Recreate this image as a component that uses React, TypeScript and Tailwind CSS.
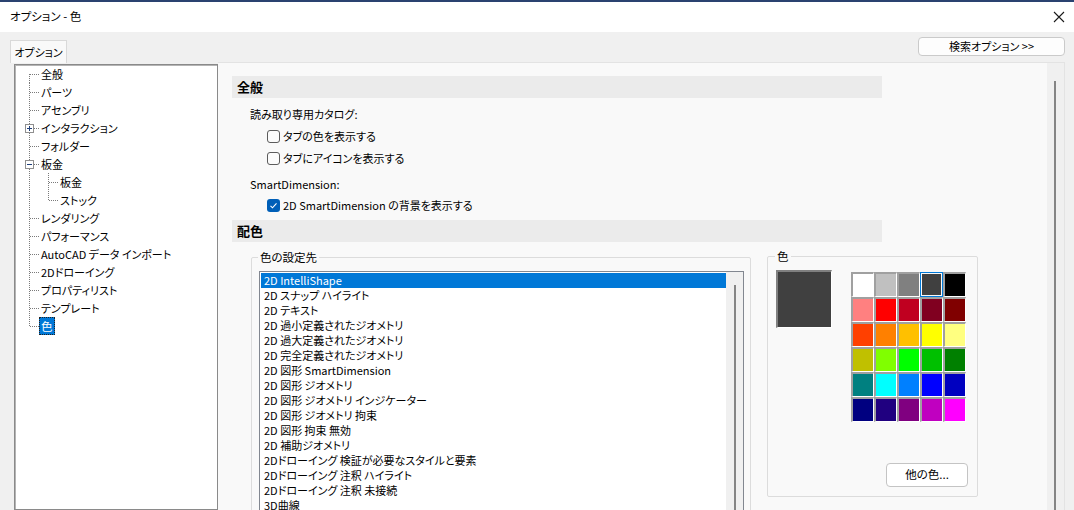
import React from 'react';

type TreeItem = {
  label: string;
  level: 0 | 1;
  box?: 'plus' | 'minus';
  first?: boolean;
  last?: boolean;
  lastChild?: boolean;
  selected?: boolean;
};

const tree: TreeItem[] = [
  { label: '全般', level: 0, first: true },
  { label: 'パーツ', level: 0 },
  { label: 'アセンブリ', level: 0 },
  { label: 'インタラクション', level: 0, box: 'plus' },
  { label: 'フォルダー', level: 0 },
  { label: '板金', level: 0, box: 'minus' },
  { label: '板金', level: 1 },
  { label: 'ストック', level: 1, lastChild: true },
  { label: 'レンダリング', level: 0 },
  { label: 'パフォーマンス', level: 0 },
  { label: 'AutoCAD データ インポート', level: 0 },
  { label: '2Dドローイング', level: 0 },
  { label: 'プロパティリスト', level: 0 },
  { label: 'テンプレート', level: 0 },
  { label: '色', level: 0, last: true, selected: true },
];

const listItems = [
  '2D IntelliShape',
  '2D スナップ ハイライト',
  '2D テキスト',
  '2D 過小定義されたジオメトリ',
  '2D 過大定義されたジオメトリ',
  '2D 完全定義されたジオメトリ',
  '2D 図形 SmartDimension',
  '2D 図形 ジオメトリ',
  '2D 図形 ジオメトリ インジケーター',
  '2D 図形 ジオメトリ 拘束',
  '2D 図形 拘束 無効',
  '2D 補助ジオメトリ',
  '2Dドローイング 検証が必要なスタイルと要素',
  '2Dドローイング 注釈 ハイライト',
  '2Dドローイング 注釈 未接続',
  '3D曲線',
];

const palette = [
  ['#ffffff', '#c0c0c0', '#808080', '#404040', '#000000'],
  ['#ff8080', '#ff0000', '#c00020', '#800020', '#800000'],
  ['#ff4000', '#ff8000', '#ffc000', '#ffff00', '#ffff80'],
  ['#c0c000', '#80ff00', '#00ff00', '#00c000', '#008000'],
  ['#008080', '#00ffff', '#0080ff', '#0000ff', '#0000c0'],
  ['#000080', '#200080', '#800080', '#c000c0', '#ff00ff'],
];

const dot = { stroke: '#7a7a7a', strokeDasharray: '1 1', shapeRendering: 'crispEdges' as const };

const Gutter: React.FC<{ item: TreeItem }> = ({ item }) => {
  if (item.level === 1) {
    return (
      <svg width="45" height="18" className="shrink-0">
        <line x1="14.5" y1="0" x2="14.5" y2="18" {...dot} />
        <line x1="33.5" y1="0" x2="33.5" y2={item.lastChild ? 10 : 18} {...dot} />
        <line x1="33.5" y1="9.5" x2="43" y2="9.5" {...dot} />
      </svg>
    );
  }
  const top = item.first ? 9 : 0;
  const bottom = item.last ? 10 : 18;
  return (
    <svg width="26" height="18" className="shrink-0">
      {item.box ? (
        <>
          {!item.first && <line x1="14.5" y1={top} x2="14.5" y2="5" {...dot} />}
          <line x1="14.5" y1="14" x2="14.5" y2={bottom} {...dot} />
          <line x1="19" y1="9.5" x2="24" y2="9.5" {...dot} />
          <rect x="10.5" y="5.5" width="8" height="8" fill="#fff" stroke="#8f8f8f" shapeRendering="crispEdges" />
          <line x1="12" y1="9.5" x2="17" y2="9.5" stroke="#1f3f7a" shapeRendering="crispEdges" />
          {item.box === 'plus' && (
            <line x1="14.5" y1="7" x2="14.5" y2="12" stroke="#1f3f7a" shapeRendering="crispEdges" />
          )}
        </>
      ) : (
        <>
          <line x1="14.5" y1={top} x2="14.5" y2={bottom} {...dot} />
          <line x1="14.5" y1="9.5" x2="24" y2="9.5" {...dot} />
        </>
      )}
    </svg>
  );
};

const CheckBox: React.FC<{ checked?: boolean; label: string }> = ({ checked, label }) => (
  <div className="flex items-center h-full">
    {checked ? (
      <div className="w-[13px] h-[13px] rounded-[3px] bg-[#005fb8] flex items-center justify-center">
        <svg width="9" height="9" viewBox="0 0 9 9">
          <polyline points="1.5,4.8 3.5,6.8 7.5,2.3" fill="none" stroke="#fff" strokeWidth="1.1" />
        </svg>
      </div>
    ) : (
      <div className="w-[13px] h-[13px] rounded-[3px] border border-[#5c5c5c] bg-[#fbfbfb]" />
    )}
    <span className="ml-[3px]">{label}</span>
  </div>
);

export default function App() {
  return (
    <div className="w-[1074px] h-[510px] overflow-hidden bg-[#f0f0f0] flex flex-col text-[11px] text-black font-['Noto_Sans_CJK_JP',sans-serif] [font-feature-settings:'palt']">
      <div className="h-[2px] bg-[#2a4270] shrink-0" />
      {/* Title bar */}
      <div className="h-[30px] bg-white flex items-center justify-between pl-[10px] pr-[9px] shrink-0 text-[11.5px]">
        <span>オプション - 色</span>
        <svg width="12" height="12" viewBox="0 0 12 12">
          <path d="M1 1 L11 11 M11 1 L1 11" stroke="#1a1a1a" strokeWidth="1.1" />
        </svg>
      </div>

      {/* Tab row */}
      <div className="h-[30px] flex items-start justify-between shrink-0">
        <div className="ml-[10px] mt-[8px] w-[57px] h-[23px] border border-b-0 border-[#d9d9d9] bg-[#f9f9f9] flex items-center justify-center">
          オプション
        </div>
        <button className="mr-[9px] mt-[5px] w-[147px] h-[19px] rounded-[4px] border border-[#cacaca] bg-[#fdfdfd] flex items-center justify-center leading-none">
          検索オプション &gt;&gt;
        </button>
      </div>

      {/* Main */}
      <div className="flex-1 flex pl-[14px] pr-[9px] min-h-0">
        {/* Tree */}
        <div className="w-[204px] mt-[2px] bg-white border border-[#8a8a8a] shadow-[inset_1px_1px_0_#b4b4b4] shrink-0">
          {tree.map((item, i) => (
            <div key={i} className="h-[18px] flex items-center leading-[18px]">
              <Gutter item={item} />
              {item.selected ? (
                <span className="-ml-[2px] px-[1px] h-[18px] border border-dotted border-[#222] bg-[#0078d7] text-white flex items-center text-[11.5px]">
                  {item.label}
                </span>
              ) : (
                <span className="whitespace-nowrap">{item.label}</span>
              )}
            </div>
          ))}
        </div>

        {/* Right panel */}
        <div className="flex-1 flex bg-[#f9f9f9] border-t border-r border-[#e3e3e3] min-w-0">
          <div className="flex-1 pl-[14px] pt-[13px] overflow-hidden">
            <div className="w-[650px] h-[22px] bg-[#ebebeb] flex items-center pl-[5px] text-[13px] font-bold">
              全般
            </div>
            <div className="mt-[5px] ml-[18px] h-[22px] flex items-center">読み取り専用カタログ:</div>
            <div className="ml-[35px] h-[22px]">
              <CheckBox label="タブの色を表示する" />
            </div>
            <div className="ml-[35px] h-[22px]">
              <CheckBox label="タブにアイコンを表示する" />
            </div>
            <div className="ml-[18px] h-[26px] pt-[4px] flex items-center">SmartDimension:</div>
            <div className="ml-[35px] h-[20px]">
              <CheckBox checked label="2D SmartDimension の背景を表示する" />
            </div>
            <div className="mt-[5px] w-[650px] h-[22px] bg-[#ebebeb] flex items-center pl-[5px] text-[13px] font-bold">
              配色
            </div>

            <div className="mt-[15px] ml-[19px] flex items-start gap-[16px]">
              {/* 色の設定先 */}
              <div className="relative w-[500px] h-[280px] border border-[#dcdcdc] rounded-[2px] pt-[13px] pl-[7px] shrink-0">
                <span className="absolute -top-[9px] left-[6px] px-[2px] bg-[#f9f9f9] leading-[16px] text-[11.5px]">色の設定先</span>
                <div className="w-[485px] h-[260px] border border-[#828790] bg-white flex">
                  <div className="flex-1 pt-[1px] pl-[1px]">
                    {listItems.map((t, i) => (
                      <div
                        key={i}
                        className={`h-[15px] leading-[15px] pl-[3px] whitespace-nowrap ${i === 0 ? 'bg-[#0078d7] text-white' : ''}`}
                      >
                        {t}
                      </div>
                    ))}
                  </div>
                  <div className="w-[17px] bg-[#f0f0f0] pt-[13px] pl-[8px]">
                    <div className="w-[2px] h-full bg-[#858585]" />
                  </div>
                </div>
              </div>

              {/* 色 */}
              <div className="relative -mt-[1px] w-[211px] h-[241px] border border-[#dcdcdc] rounded-[2px] pt-[13px] pl-[8px] pr-[9px] pb-[9px] flex flex-col shrink-0">
                <span className="absolute -top-[9px] left-[7px] px-[2px] bg-[#f9f9f9] leading-[16px] text-[11.5px]">色</span>
                <div className="flex items-start">
                  <div className="w-[56px] h-[58px] border-t-2 border-l-2 border-[#808080] border-r border-b border-r-white border-b-white bg-[#404040]" />
                  <div className="ml-[19px] mt-[2px] flex flex-col">
                    {palette.map((row, r) => (
                      <div key={r} className="flex">
                        {row.map((c, ci) =>
                          r === 0 && ci === 3 ? (
                            <div key={ci} className="w-[23px] h-[25px] border border-[#0078d7] p-[1px]">
                              <div className="w-full h-full" style={{ backgroundColor: c }} />
                            </div>
                          ) : (
                            <div
                              key={ci}
                              className="w-[23px] h-[25px] border-t-2 border-l-2 border-[#a0a0a0] border-r border-b border-r-white border-b-white"
                              style={{ backgroundColor: c }}
                            />
                          )
                        )}
                      </div>
                    ))}
                  </div>
                </div>
                <button className="mt-auto self-end w-[82px] h-[24px] rounded-[4px] border border-[#c4c4c4] bg-white flex items-center justify-center text-[11.5px]">
                  他の色...
                </button>
              </div>
            </div>
          </div>
          {/* Scrollbar */}
          <div className="w-[17px] bg-[#f0f0f0] pt-[18px] pl-[7px] shrink-0">
            <div className="w-[2px] h-full bg-[#858585]" />
          </div>
        </div>
      </div>
    </div>
  );
}
